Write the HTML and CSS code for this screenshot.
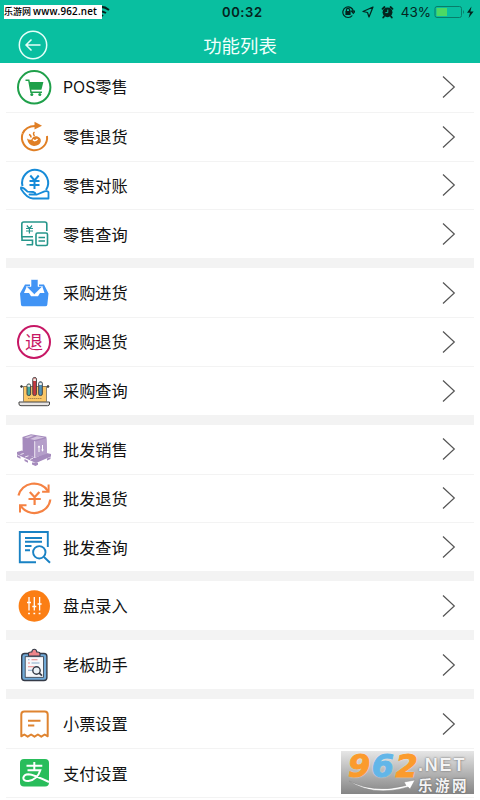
FILE: index.html
```html
<!DOCTYPE html>
<html lang="zh-CN">
<head>
    <meta charset="UTF-8">
    <meta name="viewport" content="width=device-width, initial-scale=1.0">
    <title>功能列表</title>
    <link rel="stylesheet" href="styles.css">
</head>
<body>
    <header class="header">
        <div class="status-bar">
            <svg class="wifi" width="14" height="14" viewBox="0 0 14 14" fill="none" stroke="#04241e" stroke-width="2">
                <path d="M0 3Q7 0 13 5M0 7Q5 5 10 8M1 11Q4 9 7 11"/>
            </svg>
            <span class="time">00:32</span>
            <div class="status-right">
                <svg width="14" height="14" viewBox="0 0 14 14" fill="none" stroke="#04241e" stroke-width="1.2">
                    <path d="M11.3 10.5A5.3 5.3 0 1 1 12.4 6.5M10.4 6.2h3.6l-1.7 2.2z"/>
                    <path d="M5.4 6.5V5a1.6 1.6 0 0 1 3.2 0v1.5"/>
                    <path d="M5 6.7h4v2.6H5z" fill="#04241e"/>
                </svg>
                <svg width="12" height="12" viewBox="0 0 12 12" fill="none" stroke="#04241e" stroke-width="1.2" stroke-linejoin="round">
                    <path d="M11 1L1 5.5l4.5 1L7 11z"/>
                </svg>
                <svg width="13" height="14" viewBox="0 0 13 14">
                    <circle cx="6.5" cy="7.3" r="4.9" fill="#04241e"/>
                    <path d="M1.5 3.8L3.5 2M11.5 3.8L9.5 2M3 11.5l-.8 1M10 11.5l.8 1" stroke="#04241e" stroke-width="1.8" stroke-linecap="round"/>
                    <path d="M6.8 4.6v3H4.4" fill="none" stroke="#09bfa0"/>
                </svg>
                <span class="percent">43%</span>
                <svg width="41" height="14" viewBox="0 0 41 14">
                    <rect x="1" y="1.5" width="26.5" height="11" rx="2" fill="none" stroke="#087d6a"/>
                    <rect x="2.5" y="3" width="10.5" height="8" fill="#4cd964"/>
                    <path d="M29 5v4q2-2 0-4z" fill="#087d6a"/>
                    <path d="M37.5 1.5L33 7.7h3L34.6 13l5-6.6h-3.2z" fill="#04241e"/>
                </svg>
            </div>
            <div class="site-tag">乐游网 <b>www.962.net</b></div>
        </div>
        <div class="nav-bar">
            <svg class="back" width="30" height="30" viewBox="0 0 30 30" fill="none" stroke="#e6fff9" stroke-width="1.5">
                <circle cx="15" cy="15" r="13.7"/>
                <path d="M22.5 15H8M13.5 9.5L8 15l5.5 5.5"/>
            </svg>
            <h1>功能列表</h1>
        </div>
    </header>

    <main class="menu">
        <section class="group">
            <div class="row">
                <svg class="icon" viewBox="0 0 36 36">
                    <circle cx="18.2" cy="18.3" r="16.2" fill="none" stroke="#1fa04a" stroke-width="2"/>
                    <path d="M9.5 11.2h3.3l2.2 12h11" fill="none" stroke="#1fa04a" stroke-width="1.5"/>
                    <path d="M13.2 13h14.2l-2 7.8H14.6z" fill="#1fa04a"/>
                    <circle cx="15.8" cy="25.4" r="1.5" fill="#1fa04a"/>
                    <circle cx="23.8" cy="25.4" r="1.5" fill="#1fa04a"/>
                </svg>
                <span class="label"><span class="latin">POS</span>零售</span>
                <svg class="arrow" viewBox="0 0 14 24"><path d="M1 1.5L12.3 12 1 22.5"/></svg>
            </div>
            <div class="row">
                <svg class="icon" viewBox="0 0 36 36" fill="none" stroke="#e07f25">
                    <path d="M6.6 14.5A12.6 12.6 0 1 0 31 17" stroke-width="2"/>
                    <path d="M6.6 14.5Q10 7.3 19 7" stroke-width="2"/>
                    <path d="M18.5 2.7L26 6.8l-7.5 3.8z" fill="#e07f25" stroke="none"/>
                    <path d="M13 15.5q2 .5 2 3M18.5 13q-2 1.500 0 4" stroke-width="1.5"/>
                    <path d="M11 19.5q2.5 1.700 4.500 1 1.500-4 5.500-3.200 4.300 1.500 3.800 5.300-1.500 4.500-7 4.300-5.500-.5-6.800-7.400z" fill="#e07f25" stroke="none"/>
                    <path d="M17 20.500q2 2.500 4.500-.5" stroke="#fff" stroke-width="1.5"/>
                </svg>
                <span class="label">零售退货</span>
                <svg class="arrow" viewBox="0 0 14 24"><path d="M1 1.5L12.3 12 1 22.5"/></svg>
            </div>
            <div class="row">
                <svg class="icon" viewBox="0 0 36 36" fill="none" stroke="#168bd8" stroke-width="2">
                    <path d="M6.5 19A13 13 0 1 1 30 23"/>
                    <path d="M14.3 8.5l4.2 5 4.2-5M18.5 13.5V22M13.5 14h10M13.5 18h10"/>
                    <path d="M5 20.5q2.5 0 6.5 4.2l6 .3q3.5 1 0 2.5h-4H21l7.5-3.2q3-.5 4 .7V31.5H17q-6 0-12-9.5z" stroke-width="1.8" stroke-linejoin="round"/>
                </svg>
                <span class="label">零售对账</span>
                <svg class="arrow" viewBox="0 0 14 24"><path d="M1 1.5L12.3 12 1 22.5"/></svg>
            </div>
            <div class="row">
                <svg class="icon" viewBox="0 0 36 36" fill="none" stroke="#26968b" stroke-width="1.6">
                    <path d="M17 20.8H5.8V8q0-2 2-2h21q2 0 2 2v7"/>
                    <path d="M10.8 9.5l2.6 3 2.6-3M13.4 12v5.5M10 12.5h7M10 15h7" stroke-width="1.2"/>
                    <path d="M6 20.8v3.4h10.5v4.5M10.5 28.7H17"/>
                    <rect x="20" y="17" width="11.5" height="12.5" rx="1.5"/>
                    <path d="M22.5 21.5h6.5M22.5 25h6.5"/>
                </svg>
                <span class="label">零售查询</span>
                <svg class="arrow" viewBox="0 0 14 24"><path d="M1 1.5L12.3 12 1 22.5"/></svg>
            </div>
        </section>

        <section class="group">
            <div class="row">
                <svg class="icon" viewBox="0 0 36 36" fill="#4194f5">
                    <path d="M9 9.5h5V12h-3.500L8 18h5l2 3.200h7L24 18h4.500L26.500 12H23V9.500h5l4.500 9-1.200 11.200q-.2 1.500-2 1.500H7q-1.800 0-2-1.500L4 18.500z"/>
                    <path d="M15 4.5h7v7h4.500l-8.200 8-8-8H15z" stroke="#fff" stroke-width=".6"/>
                </svg>
                <span class="label">采购进货</span>
                <svg class="arrow" viewBox="0 0 14 24"><path d="M1 1.5L12.3 12 1 22.5"/></svg>
            </div>
            <div class="row">
                <div class="icon return-badge">退</div>
                <span class="label">采购退货</span>
                <svg class="arrow" viewBox="0 0 14 24"><path d="M1 1.5L12.3 12 1 22.5"/></svg>
            </div>
            <div class="row">
                <svg class="icon" viewBox="0 0 36 36" stroke="#444" stroke-width="1">
                    <path d="M7.5 13.2h23V30h-23z" fill="#fbc766" stroke="none"/>
                    <path d="M6 13.5h25M7.5 14v14.500M30.500 14v14.500" fill="none" stroke-width=".6"/>
                    <circle cx="5.5" cy="13.5" r=".9" fill="#333"/>
                    <circle cx="32" cy="13.5" r=".9" fill="#333"/>
                    <rect x="11" y="11" width="3.6" height="11.5" rx="1.6" fill="#48a99c"/>
                    <rect x="16.8" y="4.5" width="3.6" height="18" rx="1.6" fill="#c9373e"/>
                    <rect x="22.7" y="8.8" width="3.6" height="13.7" rx="1.6" fill="#4f93ba"/>
                    <path d="M11.5 11.8h2.6v2h-2.6zM17.3 5.5h2.6v2.4h-2.6zM23.2 9.8h2.6V12h-2.6z" fill="#f3eee8" stroke="none"/>
                    <path d="M12 25.5h13.5" stroke="#9a7741" stroke-width=".8" stroke-dasharray="1.5 .5"/>
                    <path d="M3 29h30.5v2q0 1.7-2 1.7H5q-2 0-2-1.7z" fill="#e8e5e3"/>
                </svg>
                <span class="label">采购查询</span>
                <svg class="arrow" viewBox="0 0 14 24"><path d="M1 1.5L12.3 12 1 22.5"/></svg>
            </div>
        </section>

        <section class="group">
            <div class="row">
                <svg class="icon" viewBox="0 0 36 36" fill="#a58bbd">
                    <!-- pallet -->
                    <path d="M1 21l5-1.500L18.500 27l12-5 4.500 1v2.500l-15 6.500L1 23.500z"/>
                    <path d="M1 24v2l3.500 1.800v-2zM8.500 28v2l3.500 1.800v-2zM16 31.500v2l3.500 1.500 2.500-1.200v-2zM31 27.500v2l3.500-1.500v-2z"/>
                    <path d="M4.500 23.500l3.500-1.200M9 26l3.500-1.200M14 28.500l3-1.300" stroke="#fff" stroke-width=".8"/>
                    <!-- box -->
                    <path d="M6.500 6L15 3.200l15.300 2.600.7 17-12.300 3.700-12-4.500z"/>
                    <path d="M8.500 6.500L15 4.200l3 .5-6.500 2.600zM14 8l7-2.800 7.500 1.300-10 2.600z" fill="#d3c4df"/>
                    <path d="M19 10.500l11.500-3.300.5 15.500-12 3.600z" fill="#b59fca"/>
                    <path d="M18.700 10.200v16.300" stroke="#fff" stroke-width=".8"/>
                    <path d="M23 15v6M26.500 14v6" stroke="#fff" stroke-width="1"/>
                    <path d="M21.700 16.500l1.300-2.200 1.300 2.200zM25.200 18.500l1.300 2.200 1.300-2.200z" fill="#fff"/>
                </svg>
                <span class="label">批发销售</span>
                <svg class="arrow" viewBox="0 0 14 24"><path d="M1 1.5L12.3 12 1 22.5"/></svg>
            </div>
            <div class="row">
                <svg class="icon" viewBox="0 0 36 36" fill="none" stroke="#f58243" stroke-width="2.2">
                    <path d="M2.500 15.500A16 15 0 0 1 32 11M34.300 19.500A16 15 0 0 1 4.500 25.500"/>
                    <path d="M32.600 4.500v7.200h-6.500M4 32.500v-7.200h6.500" stroke-width="2"/>
                    <path d="M13.800 12l4.800 5.200 4.800-5.200M18.600 17.200V25M12.500 19h12.300"/>
                </svg>
                <span class="label">批发退货</span>
                <svg class="arrow" viewBox="0 0 14 24"><path d="M1 1.5L12.3 12 1 22.5"/></svg>
            </div>
            <div class="row">
                <svg class="icon" viewBox="0 0 36 36" fill="none" stroke="#1982c4" stroke-width="1.9">
                    <path d="M31.8 18V3H3.8v30.3H20"/>
                    <path d="M9 9h17M9 12.8h17M9 17h6.5M9 21.2h5"/>
                    <circle cx="23.3" cy="23.3" r="6.2"/>
                    <path d="M28 28l6 5.8"/>
                </svg>
                <span class="label">批发查询</span>
                <svg class="arrow" viewBox="0 0 14 24"><path d="M1 1.5L12.3 12 1 22.5"/></svg>
            </div>
        </section>

        <section class="group">
            <div class="row">
                <svg class="icon" viewBox="0 0 36 36">
                    <circle cx="18.3" cy="18" r="15.7" fill="#fb7e14"/>
                    <path d="M13 9v13.5M18.3 9v13.5M23.6 9v13.5" stroke="#fff" stroke-width="1.3"/>
                    <path d="M11 14.5h4M16.3 18.5h4M21.6 16h4" stroke="#fff" stroke-width="1.7"/>
                    <path d="M12.1 25.5h1.8M17.4 25.5h1.8M22.7 25.5h1.8" stroke="#fff" stroke-width="1.7"/>
                </svg>
                <span class="label">盘点录入</span>
                <svg class="arrow" viewBox="0 0 14 24"><path d="M1 1.5L12.3 12 1 22.5"/></svg>
            </div>
        </section>

        <section class="group">
            <div class="row">
                <svg class="icon" viewBox="0 0 36 36" stroke="#353b47" stroke-width="1.4">
                    <rect x="5.7" y="6.5" width="25.2" height="27" rx="3" fill="#70a9d7"/>
                    <rect x="9.2" y="9.7" width="18.2" height="20.6" fill="#f7f8fb" stroke-width=".8"/>
                    <path d="M12.5 9V6.5Q12.5 5 15 5h.8q.4-2.8 2.5-2.8T20.8 5h.8Q24 5 24 6.5V9z" fill="#ee858a" stroke-width="1.1"/>
                    <path d="M15.5 12.8h6M12 16h2M12 19.7h6" stroke="#e98385" stroke-width="1.1"/>
                    <path d="M12 12.8h1.5M15.5 16h8M12 23.2h5" stroke="#88a9c9" stroke-width="1.1"/>
                    <circle cx="20.5" cy="23.5" r="3.7" fill="#edf3f8"/>
                    <path d="M23.2 26.2l2.8 2.5" stroke-width="1.8"/>
                </svg>
                <span class="label">老板助手</span>
                <svg class="arrow" viewBox="0 0 14 24"><path d="M1 1.5L12.3 12 1 22.5"/></svg>
            </div>
        </section>

        <section class="group">
            <div class="row">
                <svg class="icon" viewBox="0 0 36 36" fill="none" stroke="#df8430" stroke-width="2" stroke-linejoin="round">
                    <path d="M5.3 30.3V8.5q0-3 3-3h20.4q3 0 3 3v21.8l-3-1.8-3.400 2.200-3.400-2.200-3.400 2.200-3.400-2.200-3.400 2.200-3.400-2.200z"/>
                    <path d="M12 14.7h12.5M12 19.6h6.3"/>
                </svg>
                <span class="label">小票设置</span>
                <svg class="arrow" viewBox="0 0 14 24"><path d="M1 1.5L12.3 12 1 22.5"/></svg>
            </div>
            <div class="row">
                <svg class="icon" viewBox="0 0 36 36">
                    <rect x="4" y="4" width="29" height="27.5" rx="4" fill="#29bd5b"/>
                    <path d="M10.5 10.8h15.8M18.3 7v8.2M11.5 15.2h12.8q-2.8 9.2-11.8 10.8-5 .2-5.2-3 .5-3.8 5.2-3.8Q17 19.3 33 27" fill="none" stroke="#fff" stroke-width="2"/>
                </svg>
                <span class="label">支付设置</span>
            </div>
        </section>
    </main>

    <div class="watermark">
        <div class="wm-digits"><span>9</span><span class="blue">6</span><span>2</span></div>
        <div class="wm-text">
            <div class="wm-net">.NET</div>
            <div class="wm-name">乐游网</div>
        </div>
        <svg class="wm-swoosh" viewBox="0 0 68 16"><path d="M1 2Q26 15 58 6.5L56 3l11-2-5 9-2-2Q25 18 1 2z" fill="#fff" stroke="#888" stroke-width=".5"/></svg>
    </div>
</body>
</html>
```
FILE: styles.css
```css
* {
    box-sizing: border-box;
}
body {
    margin: 0;
    width: 480px;
    height: 800px;
    overflow: hidden;
    position: relative;
    background: #fff;
    color: #111;
    font-family: "Noto Sans CJK SC", sans-serif;
}
.header {
    height: 63px;
    background: #09bfa0;
}
.status-bar {
    position: relative;
    height: 24px;
    display: flex;
    align-items: center;
    justify-content: space-between;
    padding: 0 5px 0 96px;
    color: #04241e;
    font-family: Inter, sans-serif;
    font-size: 13px;
}
.time {
    margin-left: 34px;
    font-weight: 600;
    letter-spacing: 0.6px;
}
.status-right {
    display: flex;
    align-items: center;
    gap: 7px;
}
.percent {
    font-size: 13.5px;
    margin-right: -4px;
}
.site-tag {
    position: absolute;
    left: 4px;
    top: 5px;
    width: 98px;
    height: 14px;
    background: #fff;
    color: #000;
    font: 500 9px/14px "Noto Sans CJK SC", sans-serif;
    white-space: nowrap;
}
.site-tag b {
    font: 600 9.8px "Open Sans", sans-serif;
    letter-spacing: 0.2px;
}
.nav-bar {
    height: 39px;
    display: grid;
    grid-template-columns: 62px 1fr 62px;
    align-items: center;
    padding-top: 3px;
}
.back {
    margin-left: 18px;
}
.nav-bar h1 {
    margin: 0;
    color: #f2fffc;
    font-size: 18.4px;
    font-weight: 400;
    line-height: 24px;
    text-align: center;
}
.menu {
    margin: 0 6px;
    display: flex;
    flex-direction: column;
    gap: 10.3px;
    background: #f3f3f3;
}
.group {
    background: #fff;
}
.group:last-child {
    border-bottom: 1px solid #f3f3f3;
}
.row {
    height: 48.75px;
    display: flex;
    align-items: center;
    padding: 0 18px 0 10px;
}
.row + .row {
    border-top: 1px solid #f3f3f3;
}
.icon {
    width: 36px;
    height: 36px;
    flex: none;
}
.return-badge {
    width: 34px;
    height: 34px;
    margin: 0 1px;
    border: 2px solid #c71765;
    border-radius: 50%;
    color: #c71765;
    font-size: 18px;
    line-height: 28px;
    text-align: center;
}
.label {
    flex: 1;
    padding: 0 0 1px 11px;
    font-size: 16.2px;
    line-height: 24px;
}
.latin {
    font-family: Inter, sans-serif;
    font-size: 15.8px;
}
.arrow {
    width: 14px;
    height: 24px;
    fill: none;
    stroke: #555;
    stroke-width: 1.2;
}
.watermark {
    position: absolute;
    left: 341px;
    top: 751px;
    width: 133px;
    height: 43px;
    background: linear-gradient(#e6e6e6, #858585);
    font-weight: 700;
    color: #f4f4f4;
}
.wm-digits {
    position: absolute;
    left: 7px;
    top: -4px;
    color: #fb9b2d;
    font: italic 700 32px/38px "DejaVu Sans", sans-serif;
    letter-spacing: 1.5px;
    -webkit-text-stroke: 1px currentColor;
    text-shadow: 0 0 2px #fff;
}
.wm-digits .blue {
    color: #62b6e8;
}
.wm-text {
    position: absolute;
    left: 77px;
    top: 4px;
    text-shadow: 0 0 2px #555;
}
.wm-net {
    font: 700 18px/20px "Liberation Sans", sans-serif;
    letter-spacing: 1.8px;
}
.wm-name {
    font-size: 14.5px;
    line-height: 20px;
    letter-spacing: 2.5px;
}
.wm-swoosh {
    position: absolute;
    left: 7px;
    top: 28px;
    width: 68px;
    height: 16px;
}
```
